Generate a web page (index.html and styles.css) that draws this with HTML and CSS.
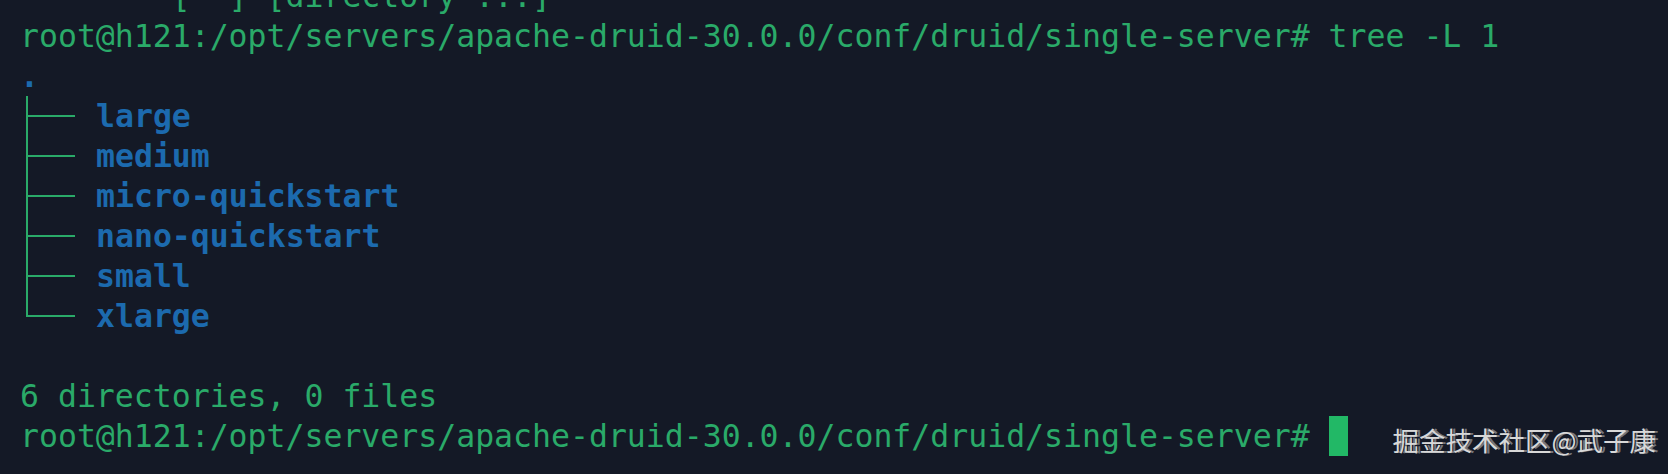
FILE: index.html
```html
<!DOCTYPE html>
<html lang="zh">
<head>
<meta charset="utf-8">
<title>terminal</title>
<link rel="stylesheet" href="styles.css">
</head>
<body>
<div class="term">
  <div class="line">        [--] [directory ...]</div>
  <div class="line">root@h121:/opt/servers/apache-druid-30.0.0/conf/druid/single-server# tree -L 1</div>
  <div class="line dir">.</div>
  <div class="line tree"><span class="branch"></span><span class="dir">large</span></div>
  <div class="line tree"><span class="branch"></span><span class="dir">medium</span></div>
  <div class="line tree"><span class="branch"></span><span class="dir">micro-quickstart</span></div>
  <div class="line tree"><span class="branch"></span><span class="dir">nano-quickstart</span></div>
  <div class="line tree"><span class="branch"></span><span class="dir">small</span></div>
  <div class="line tree"><span class="branch last"></span><span class="dir">xlarge</span></div>
  <div class="line"> </div>
  <div class="line">6 directories, 0 files</div>
  <div class="line">root@h121:/opt/servers/apache-druid-30.0.0/conf/druid/single-server# <span class="cursor"></span></div>
</div>
<div class="watermark">掘金技术社区@武子康</div>
</body>
</html>
```

FILE: styles.css
```css
html, body {
  margin: 0;
  padding: 0;
  background: #141926;
  height: 100%;
  overflow: hidden;
}

body {
  position: relative;
}

.term {
  margin-top: -24px;
  padding: 0 20px;
  font-family: "DejaVu Sans Mono", "Liberation Mono", monospace;
  font-size: 31.5px;
  line-height: 40px;
  color: #2aaa69;
}

.line {
  height: 40px;
  white-space: pre;
}

.dir {
  color: #1c6aae;
  font-weight: bold;
}

.tree {
  display: flex;
  align-items: stretch;
}

.branch {
  position: relative;
  width: 76px;
  flex: none;
}

.branch::before {
  content: "";
  position: absolute;
  left: 6px;
  top: 0;
  bottom: 0;
  width: 2px;
  background: #2aaa69;
}

.branch.last::before {
  bottom: 19px;
}

.branch::after {
  content: "";
  position: absolute;
  left: 6px;
  width: 49px;
  top: 19px;
  height: 2px;
  background: #2aaa69;
}

.cursor {
  display: inline-block;
  width: 19px;
  height: 40px;
  vertical-align: top;
  background: #22b866;
}

.watermark {
  position: absolute;
  right: 12px;
  bottom: 19px;
  font-family: "Noto Sans CJK SC", sans-serif;
  font-size: 26.5px;
  line-height: 30px;
  color: #d8d8d8;
  text-shadow: 3px 0 0 rgba(200, 200, 200, 0.55);
  white-space: nowrap;
}
```
